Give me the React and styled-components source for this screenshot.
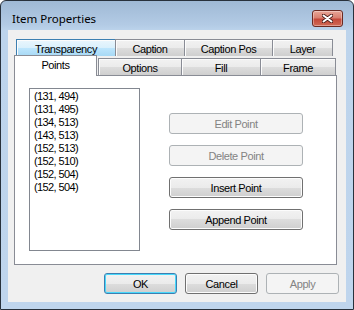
import styled, { createGlobalStyle } from "styled-components";

const GlobalStyle = createGlobalStyle`
  body {
    margin: 0;
    font-family: "Liberation Sans", Arial, sans-serif;
  }
`;

const topTabs = [
  { label: "Transparency", width: 100, hot: true },
  { label: "Caption", width: 70 },
  { label: "Caption Pos", width: 89 },
  { label: "Layer", width: 61 },
];

const frontTabs = [
  { label: "Points", width: 79, selected: true },
  { label: "Options", width: 84 },
  { label: "Fill", width: 80 },
  { label: "Frame", width: 76 },
];

const points = [
  "(131, 494)",
  "(131, 495)",
  "(134, 513)",
  "(143, 513)",
  "(152, 513)",
  "(152, 510)",
  "(152, 504)",
  "(152, 504)",
];

const App = () => {
  return (
    <>
      <GlobalStyle />
      <Window>
        <TitleBar>
          <Title>Item Properties</Title>
          <CloseButton>
            <svg width="11" height="9" viewBox="0 0 11 9">
              <path d="M1.5 1.5 L9.5 7.5 M9.5 1.5 L1.5 7.5" stroke="#4a1d18" strokeWidth="3.6" strokeLinecap="round" />
              <path d="M1.5 1.5 L9.5 7.5 M9.5 1.5 L1.5 7.5" stroke="#ffffff" strokeWidth="2" strokeLinecap="round" />
            </svg>
          </CloseButton>
        </TitleBar>
        <Client>
          <TabControl>
            <BackRow>
              {topTabs.map((t) => (
                <Tab key={t.label} width={t.width} hot={t.hot}>
                  {t.label}
                </Tab>
              ))}
            </BackRow>
            <FrontRow>
              {frontTabs.map((t) =>
                t.selected ? (
                  <SelectedTab key={t.label} width={t.width}>
                    {t.label}
                  </SelectedTab>
                ) : (
                  <Tab key={t.label} width={t.width}>
                    {t.label}
                  </Tab>
                )
              )}
            </FrontRow>
            <Panel>
              <ListBox>
                {points.map((p, i) => (
                  <ListItem key={i}>{p}</ListItem>
                ))}
              </ListBox>
              <ActionColumn>
                <Button disabled>Edit Point</Button>
                <Button disabled>Delete Point</Button>
                <Button>Insert Point</Button>
                <Button>Append Point</Button>
              </ActionColumn>
            </Panel>
          </TabControl>
          <Footer>
            <DialogButton isDefault>OK</DialogButton>
            <DialogButton>Cancel</DialogButton>
            <DialogButton disabled>Apply</DialogButton>
          </Footer>
        </Client>
      </Window>
    </>
  );
};

export default App;

const Window = styled.div`
  width: 354px;
  height: 310px;
  box-sizing: border-box;
  border: 1px solid #28313c;
  border-radius: 6px 6px 0 0;
  background: linear-gradient(#9fb9d5 0px, #b3cbe5 24px, #bdd4ec 30px, #bfd5ed 100%);
  display: flex;
  flex-direction: column;
  overflow: hidden;
`;

const TitleBar = styled.div`
  height: 29px;
  box-sizing: border-box;
  padding: 5px 10px 0 11px;
  display: flex;
  align-items: center;
  justify-content: space-between;
`;

const Title = styled.span`
  font-family: "Noto Sans", "Open Sans", sans-serif;
  font-size: 11.5px;
  color: #000;
`;

const CloseButton = styled.div`
  width: 29px;
  height: 15px;
  border: 1px solid #6b2a22;
  border-radius: 3px;
  background: linear-gradient(#e8a697 0%, #d98070 45%, #c4493a 55%, #d06a55 100%);
  box-shadow: inset 0 0 0 1px rgba(255, 255, 255, 0.35);
  display: flex;
  align-items: center;
  justify-content: center;
`;

const Client = styled.div`
  margin: 0 7px;
  height: 272px;
  background: #f0f0f0;
  display: flex;
  flex-direction: column;
`;

const TabControl = styled.div`
  margin: 9px 0 0 6px;
  width: 323px;
  display: flex;
  flex-direction: column;
  font-size: 11px;
  letter-spacing: -0.4px;
`;

const BackRow = styled.div`
  height: 19px;
  padding-left: 2px;
  display: flex;
  align-items: flex-start;
`;

const FrontRow = styled.div`
  height: 17px;
  padding-left: 2px;
  display: flex;
  align-items: flex-start;
`;

const Tab = styled.div`
  width: ${({ width }) => width}px;
  height: 17px;
  box-sizing: border-box;
  border: 1px solid ${({ hot }) => (hot ? "#3c7fb1" : "#898c95")};
  border-bottom: none;
  background: ${({ hot }) =>
    hot
      ? "linear-gradient(#eaf6fd 0%, #d9f0fc 50%, #bee6fd 50%, #a7d9f5 100%)"
      : "linear-gradient(#f2f2f2 0%, #ebebeb 50%, #dddddd 50%, #cfcfcf 100%)"};
  box-shadow: inset 1px 1px 0 #fcfcfc;
  margin-right: -1px;
  display: flex;
  align-items: center;
  justify-content: center;
  color: #000;
  padding-top: 1px;
`;

const SelectedTab = styled.div`
  position: relative;
  z-index: 1;
  width: ${({ width }) => width + 4}px;
  height: 21px;
  margin: -3px 1px 0 -2px;
  box-sizing: border-box;
  border: 1px solid #898c95;
  border-bottom: none;
  background: #fff;
  display: flex;
  justify-content: center;
  padding-top: 3px;
  color: #000;
`;

const Panel = styled.div`
  height: 190px;
  box-sizing: border-box;
  border: 1px solid #898c95;
  background: #fff;
  padding: 12px 0 0 14px;
  display: flex;
  align-items: flex-start;
  gap: 29px;
`;

const ListBox = styled.div`
  width: 111px;
  height: 163px;
  box-sizing: border-box;
  border: 1px solid #828790;
  background: #fff;
  padding: 1px 0 0 4px;
  display: flex;
  flex-direction: column;
`;

const ListItem = styled.div`
  height: 13px;
  line-height: 13px;
  font-size: 11px;
  letter-spacing: -0.6px;
  color: #000;
  white-space: nowrap;
`;

const ActionColumn = styled.div`
  padding-top: 25px;
  display: flex;
  flex-direction: column;
  gap: 11px;
`;

const Button = styled.button`
  width: 134px;
  height: 21px;
  box-sizing: border-box;
  border: 1px solid ${({ disabled }) => (disabled ? "#adb2b5" : "#707070")};
  border-radius: 3px;
  background: ${({ disabled }) =>
    disabled
      ? "#f4f4f4"
      : "linear-gradient(#f2f2f2 0%, #ebebeb 50%, #dddddd 50%, #cfcfcf 100%)"};
  box-shadow: ${({ disabled }) => (disabled ? "none" : "inset 0 0 0 1px #fcfcfc")};
  color: ${({ disabled }) => (disabled ? "#838383" : "#000")};
  font-family: "Liberation Sans", Arial, sans-serif;
  font-size: 11px;
  letter-spacing: -0.4px;
  padding: 0;
`;

const Footer = styled.div`
  margin-top: 8px;
  padding-right: 7px;
  display: flex;
  justify-content: flex-end;
  gap: 8px;
`;

const DialogButton = styled.button`
  width: 73px;
  height: 21px;
  box-sizing: border-box;
  border: 1px solid
    ${({ disabled, isDefault }) => (disabled ? "#adb2b5" : isDefault ? "#3c7fb1" : "#707070")};
  border-radius: 3px;
  background: ${({ disabled }) =>
    disabled
      ? "#f4f4f4"
      : "linear-gradient(#f2f2f2 0%, #ebebeb 50%, #dddddd 50%, #cfcfcf 100%)"};
  box-shadow: ${({ disabled, isDefault }) =>
    disabled ? "none" : isDefault ? "inset 0 0 0 1px #48d8fb" : "inset 0 0 0 1px #fcfcfc"};
  color: ${({ disabled }) => (disabled ? "#838383" : "#000")};
  font-family: "Liberation Sans", Arial, sans-serif;
  font-size: 11px;
  letter-spacing: -0.4px;
  padding: 0;
`;
